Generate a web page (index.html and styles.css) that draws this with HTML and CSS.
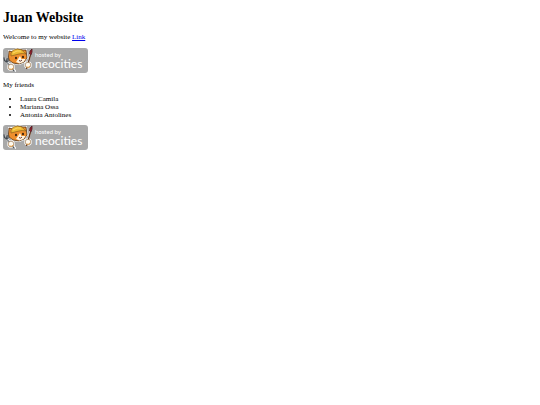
FILE: index.html
```html
<!DOCTYPE html>
<html lang="en">
<head>
<meta charset="utf-8">
<meta name="viewport" content="width=device-width, initial-scale=1">
<title>Juan Website</title>
<link rel="stylesheet" href="styles.css">
</head>
<body>
<svg class="sprite" aria-hidden="true">
  <symbol id="badge" viewBox="0 0 85 25">
    <rect width="85" height="25" rx="3" fill="#a9a9a9"/>
    <!-- pale halo behind the cat and its tools -->
    <g fill="#fff" stroke="#fff" stroke-width="2" stroke-linejoin="round" stroke-linecap="round">
      <path d="M6 3l4 0 4-2 6 1 3 0 1 8-3 4-5 2-6-1-4-4z"/>
      <path d="M2 11l2 3 8 9M28 3l-4 17" fill="none"/>
      <circle cx="8" cy="19" r="2.800"/><circle cx="25" cy="17" r="2.800"/>
    </g>
    <path d="M5.500 9l.5-6 4 1 4-3 6 1 3 0 1 8-3 4-5 2-6-1-4-3z" fill="#ee8f2d" stroke="#4d2c10" stroke-width=".8" stroke-linejoin="round"/>
    <path d="M13 14l2-3 2-3 1.500 3 4 0-2 3-4 1.500z" fill="#fff3df"/>
    <path d="M8 8q-1-6 6-7 5-.5 9 5-4-1-7 0-4 1-8 2z" fill="#edb934" stroke="#80541a" stroke-width=".6"/>
    <path d="M10 5q4-3 8-2" fill="none" stroke="#ffdf6e" stroke-width=".9"/>
    <ellipse cx="13" cy="10" rx=".9" ry="1.200" fill="#24120b"/>
    <ellipse cx="20" cy="9" rx=".9" ry="1.200" fill="#24120b"/>
    <path d="M16 12.500q1.500 1.500 3-.5" fill="none" stroke="#5b2018" stroke-width=".9"/>
    <path d="M1 9.500l.5 3 2 1.500 1.500-1 0-3M3 10.500l.5 3 8 10" fill="none" stroke="#42484e" stroke-width="1.200"/>
    <path d="M4 14l6 8" stroke="#c8d0d6" stroke-width=".6"/>
    <path d="M27.500 7l-4 14" stroke="#63391f" stroke-width="1.400"/>
    <path d="M26.500 6l.5-3 2-2 0 3-1 3z" fill="#98202a" stroke="#4b1720" stroke-width=".8"/>
    <circle cx="8" cy="19" r="2.800" fill="#fffaf0" stroke="#8a6136" stroke-width=".6"/>
    <circle cx="25" cy="17" r="2.800" fill="#fffaf0" stroke="#8a6136" stroke-width=".6"/>
    <path d="M6.500 21q2 1 4-1M23.500 19q2 1 3.500-1" fill="none" stroke="#e79a3b" stroke-width=".9"/>
  </symbol>
</svg>
<h1>Juan Website</h1>
<p>Welcome to my website <a href="#friends">Link</a></p>
<svg class="badge" viewBox="0 0 85 25">
  <use href="#badge"/>
  <text class="hosted" x="32" y="9">hosted by</text>
  <text class="brand" x="32" y="20">neocities</text>
</svg>
<p id="friends" class="caption">My friends</p>
<ul>
  <li>Laura Camila</li>
  <li>Mariana Ossa</li>
  <li>Antonia Antolines</li>
</ul>
<svg class="badge" viewBox="0 0 85 25">
  <use href="#badge"/>
  <text class="hosted" x="32" y="9">hosted by</text>
  <text class="brand" x="32" y="20">neocities</text>
</svg>
</body>
</html>
```
FILE: styles.css
```css
body {
  margin: 10px 3px;
  background: #fff;
  color: #000;
  font: 7px/8px "Liberation Serif", "Times New Roman", serif;
}
h1 {
  margin: 0 0 7px;
  font-size: 14px;
  line-height: 16px;
}
p {
  margin: 0 0 7px;
}
.caption {
  margin-bottom: 6px;
}
ul {
  margin: 0 0 6px;
  padding-left: 17px;
}
a {
  color: #00e;
}
.sprite {
  position: absolute;
  width: 0;
  height: 0;
}
.badge {
  display: block;
  width: 85px;
  height: 25px;
  margin-bottom: 8px;
}
.hosted,
.brand {
  fill: #fff;
  font-family: Lato, sans-serif;
}
.hosted {
  font-size: 6px;
}
.brand {
  font-size: 12px;
}
```
